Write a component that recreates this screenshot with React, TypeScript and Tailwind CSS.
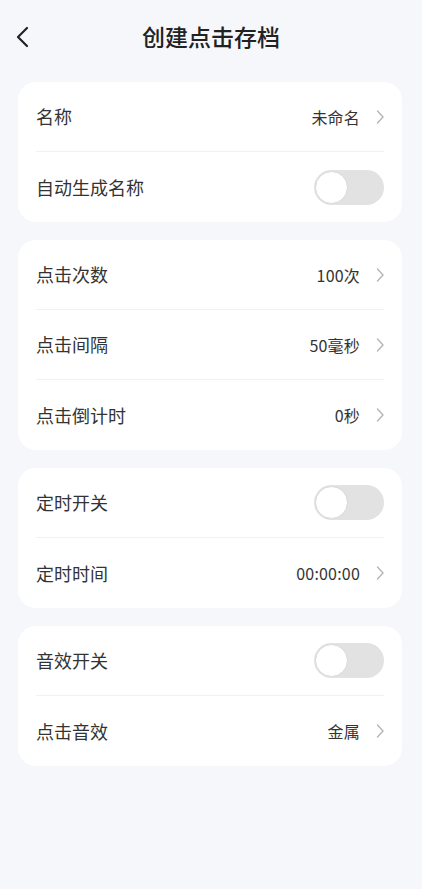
import React from 'react';

const font = { fontFamily: '"Noto Sans CJK SC", "Noto Sans", sans-serif' };

const Chevron = () => (
  <svg width="8" height="16" viewBox="0 0 8 16" fill="none" className="ml-[16px]">
    <path d="M1.5 2l5.5 6-5.5 6" stroke="#b5b5b5" strokeWidth="1.4" strokeLinecap="round" strokeLinejoin="round" />
  </svg>
);

const Toggle = () => (
  <div className="w-[70px] h-[35px] rounded-full bg-[#e2e2e2] p-[1px] flex items-center">
    <div className="w-[33px] h-[33px] rounded-full bg-white border border-[#d8d8d8]" />
  </div>
);

type Row = { label: string; value?: string; toggle?: boolean };

const Card = ({ rows }: { rows: Row[] }) => (
  <div className="bg-white rounded-[18px] px-[18px]">
    {rows.map((r, i) => (
      <div
        key={r.label}
        className={`h-[70px] flex items-center justify-between ${i < rows.length - 1 ? 'border-b border-[#f0f1f3]' : ''}`}
      >
        <span className="text-[18px] text-[#333]">{r.label}</span>
        {r.toggle ? (
          <Toggle />
        ) : (
          <div className="flex items-center">
            <span className="text-[16px] text-[#333] tracking-[0.2px]">{r.value}</span>
            <Chevron />
          </div>
        )}
      </div>
    ))}
  </div>
);

export default function App() {
  return (
    <div className="w-[422px] h-[889px] bg-[#f5f7fb]" style={font}>
      <div className="relative h-[78px] flex items-start justify-center">
        <svg width="16" height="24" viewBox="0 0 16 24" fill="none" className="absolute left-[14px] top-[25px]">
          <path d="M13 3L4 12l9 9" stroke="#222" strokeWidth="2.2" strokeLinecap="round" strokeLinejoin="round" />
        </svg>
        <h1 className="text-[23px] font-medium text-[#222] mt-[20px] leading-[32px]">创建点击存档</h1>
      </div>
      <div className="pl-[18px] pr-[20px] flex flex-col gap-[18px] mt-[4px]">
        <Card rows={[{ label: '名称', value: '未命名' }, { label: '自动生成名称', toggle: true }]} />
        <Card
          rows={[
            { label: '点击次数', value: '100次' },
            { label: '点击间隔', value: '50毫秒' },
            { label: '点击倒计时', value: '0秒' },
          ]}
        />
        <Card rows={[{ label: '定时开关', toggle: true }, { label: '定时时间', value: '00:00:00' }]} />
        <Card rows={[{ label: '音效开关', toggle: true }, { label: '点击音效', value: '金属' }]} />
      </div>
    </div>
  );
}
